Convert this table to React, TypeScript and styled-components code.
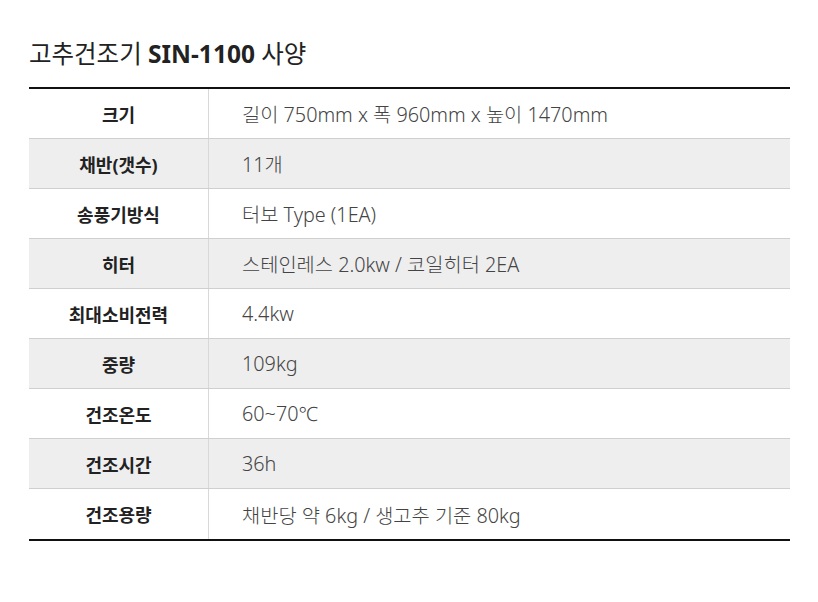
import styled, { createGlobalStyle } from "styled-components";

const specs = [
    { label: "크기", value: "길이 750mm x 폭 960mm x 높이 1470mm" },
    { label: "채반(갯수)", value: "11개" },
    { label: "송풍기방식", value: "터보 Type (1EA)" },
    { label: "히터", value: "스테인레스 2.0kw / 코일히터 2EA" },
    { label: "최대소비전력", value: "4.4kw" },
    { label: "중량", value: "109kg" },
    { label: "건조온도", value: "60~70℃" },
    { label: "건조시간", value: "36h" },
    { label: "건조용량", value: "채반당 약 6kg / 생고추 기준 80kg" },
];

function App() {
    return (
        <>
            <GlobalStyle />
            <Page>
                <Title>
                    고추건조기 <strong>SIN-1100</strong> 사양
                </Title>
                <SpecTable>
                    {specs.map((spec, index) => (
                        <Row key={spec.label} $shaded={index % 2 === 1}>
                            <Label>{spec.label}</Label>
                            <Value>{spec.value}</Value>
                        </Row>
                    ))}
                </SpecTable>
            </Page>
        </>
    );
}

const GlobalStyle = createGlobalStyle`
  body {
    margin: 0;
    background: #fff;
    font-family: "Noto Sans", "Noto Sans CJK KR", sans-serif;
  }
`;

const Page = styled.div`
  width: 818px;
  height: 602px;
  padding: 37px 28px 0 29px;
  box-sizing: border-box;
`;

const Title = styled.h1`
  margin: 0 0 16px;
  font-size: 24.5px;
  font-weight: 400;
  line-height: 34px;
  color: #222;

  strong {
    font-weight: 700;
  }
`;

const SpecTable = styled.div`
  border-top: 2px solid #111;
  border-bottom: 2px solid #111;
`;

const Row = styled.div<{ $shaded: boolean }>`
  display: grid;
  grid-template-columns: 180px 1fr;
  height: 50px;
  box-sizing: border-box;
  background: ${(p) => (p.$shaded ? "#eeeeee" : "#fff")};
  border-bottom: 1px solid #cfcfcf;

  &:last-child {
    border-bottom: none;
  }
`;

const Label = styled.div`
  display: flex;
  align-items: center;
  justify-content: center;
  font-size: 18px;
  font-weight: 700;
  color: #222;
  border-right: 1px solid #d8d8d8;
`;

const Value = styled.div`
  display: flex;
  align-items: center;
  padding-left: 33px;
  font-size: 19.8px;
  font-weight: 300;
  color: #444;
`;

export default App;
